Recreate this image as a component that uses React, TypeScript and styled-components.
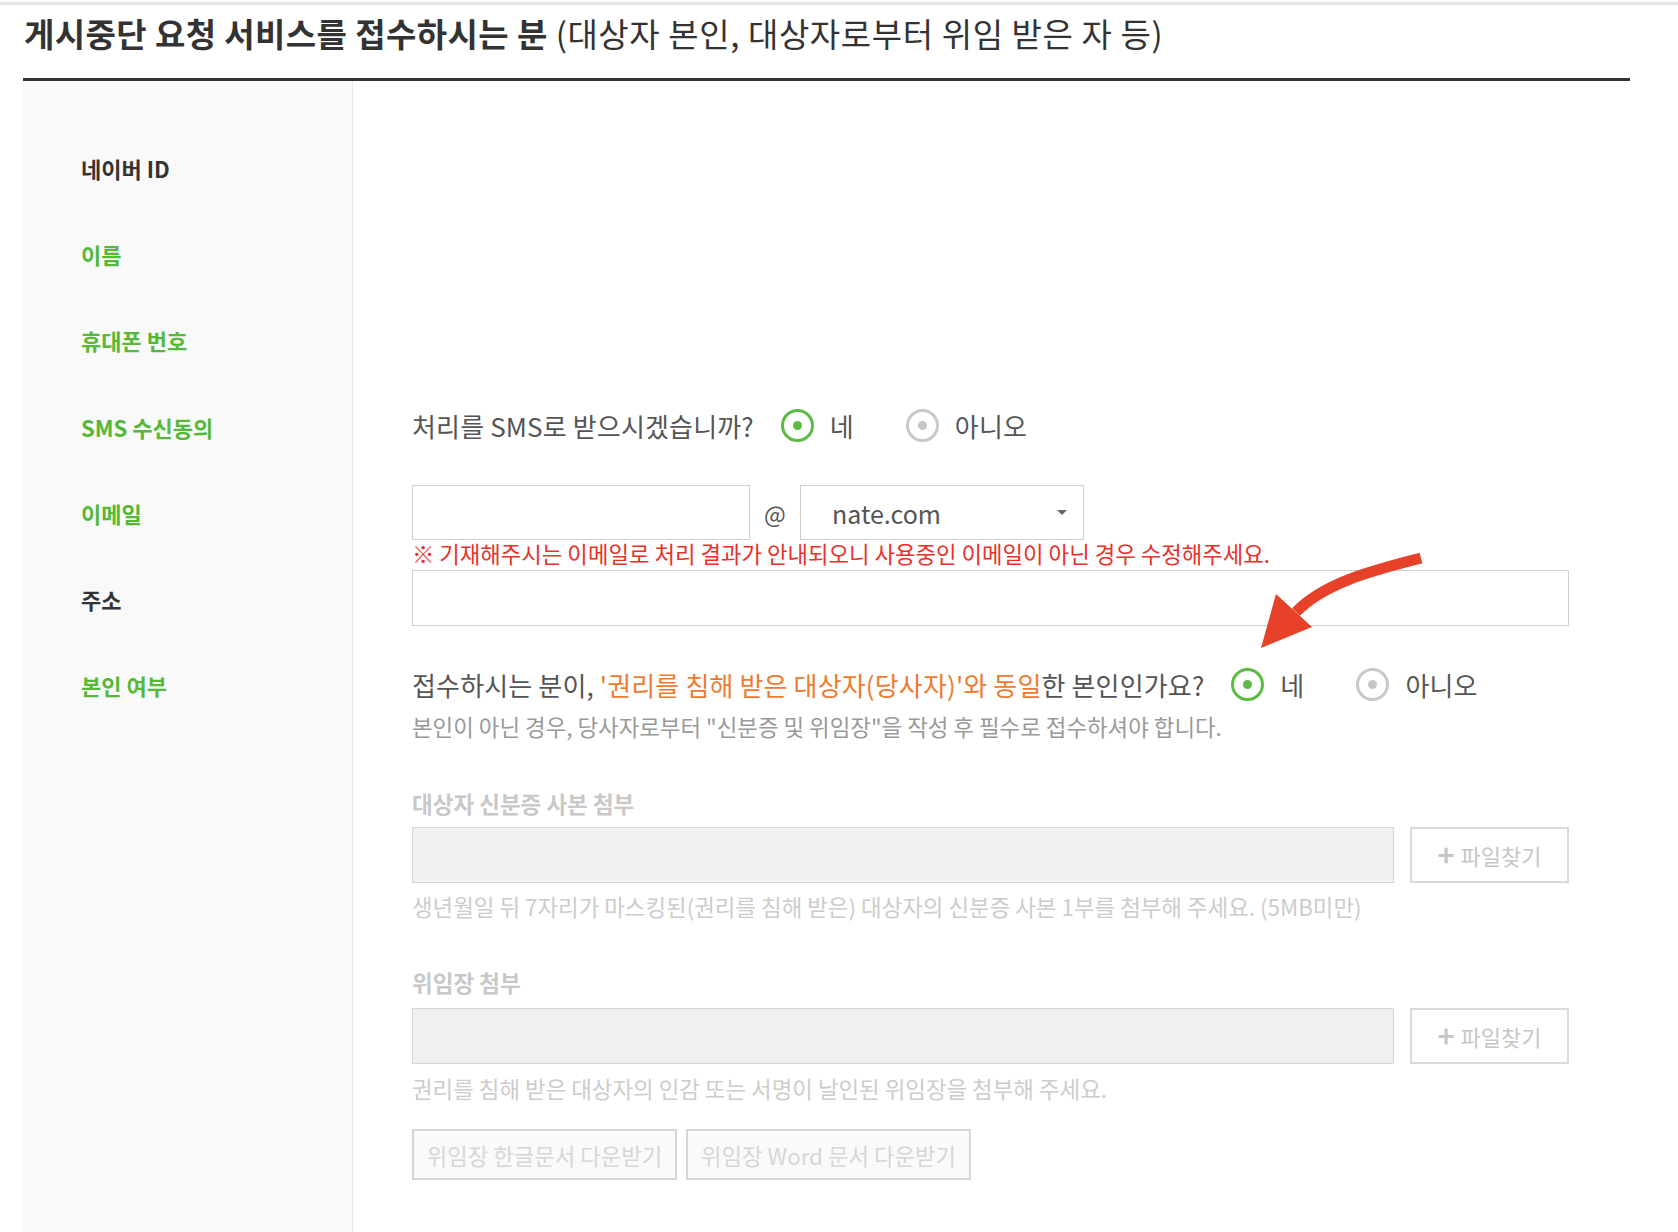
import styled, { createGlobalStyle } from "styled-components";

const GlobalStyle = createGlobalStyle`
  html, body {
    margin: 0;
    padding: 0;
    background: #fff;
  }
  body {
    font-family: "Noto Sans CJK KR", "Noto Sans", sans-serif;
    color: #333;
  }
  * { box-sizing: border-box; }
`;

const Page = styled.div`
  position: relative;
  width: 1678px;
`;

const TopLine = styled.div`
  margin-top: 2px;
  height: 3px;
  background: #e1e5ea;
`;

const Wrapper = styled.div`
  margin-left: 23px;
  width: 1607px;
`;

const Header = styled.div`
  padding: 8px 0 25px 1px;
  border-bottom: 3px solid #333;
`;

const Title = styled.h2`
  margin: 0;
  font-size: 33px;
  line-height: 40px;
  font-weight: 700;
  letter-spacing: 0.4px;
  color: #333;
  white-space: nowrap;
`;

const TitleSub = styled.span`
  font-weight: 400;
  letter-spacing: 0.6px;
`;

const Row = styled.div<{ $height?: number }>`
  display: grid;
  grid-template-columns: 330px 1fr;
  min-height: ${(p) => (p.$height ? `${p.$height}px` : "auto")};
`;

const LabelCell = styled.div<{ $top: number; $green?: boolean }>`
  background: #f9f9f9;
  border-right: 1px solid #e9e9e9;
  padding: ${(p) => p.$top - 1}px 0 0 58px;
  font-size: 22px;
  line-height: 30px;
  font-weight: 700;
  color: ${(p) => (p.$green ? "#55b837" : "#333")};
`;

const ContentCell = styled.div<{ $top?: number; $bottom?: number }>`
  padding: ${(p) => p.$top ?? 0}px 0 ${(p) => p.$bottom ?? 0}px 59px;
`;

const QuestionLine = styled.div`
  display: flex;
  align-items: center;
  height: 34px;
  font-size: 26px;
  letter-spacing: 0.15px;
  color: #555;
  white-space: nowrap;
`;

const Accent = styled.span`
  color: #ef7b30;
`;

const RadioItem = styled.span<{ $first?: boolean }>`
  display: inline-flex;
  align-items: center;
  gap: 16px;
  margin-left: ${(p) => (p.$first ? 27 : 52)}px;
  font-size: 26px;
  color: #555;
`;

const RadioMark = styled.span<{ $on?: boolean }>`
  width: 33px;
  height: 33px;
  border-radius: 50%;
  border: 3.5px solid ${(p) => (p.$on ? "#5cbb45" : "#c9c9c9")};
  display: inline-flex;
  align-items: center;
  justify-content: center;
  filter: ${(p) => (p.$on ? "none" : "blur(0.4px)")};

  &::after {
    content: "";
    width: 9px;
    height: 9px;
    border-radius: 50%;
    background: ${(p) => (p.$on ? "#5cbb45" : "#c6c6c6")};
  }
`;

const EmailLine = styled.div`
  display: flex;
  align-items: center;
  height: 55px;
`;

const TextInput = styled.div<{ $width: number; $height?: number }>`
  width: ${(p) => p.$width}px;
  height: ${(p) => p.$height ?? 55}px;
  border: 1px solid #cfcfcf;
  background: #fff;
`;

const At = styled.span`
  width: 50px;
  text-align: center;
  font-size: 23px;
  color: #555;
`;

const Select = styled.div`
  width: 284px;
  height: 55px;
  border: 1px solid #cfcfcf;
  display: flex;
  align-items: center;
  justify-content: space-between;
  padding: 0 16px 0 31px;
  font-size: 25px;
  color: #555;
`;

const Caret = styled.span`
  width: 0;
  height: 0;
  border-left: 5px solid transparent;
  border-right: 5px solid transparent;
  border-top: 5px solid #666;
`;

const Notice = styled.div`
  height: 26px;
  line-height: 26px;
  font-size: 22.3px;
  color: #e9302a;
  white-space: nowrap;
`;

const SubText = styled.div<{ $top: number; $muted?: boolean }>`
  margin-top: ${(p) => p.$top}px;
  line-height: 28px;
  font-size: 22.4px;
  color: ${(p) => (p.$muted ? "#cccccc" : "#999")};
  white-space: nowrap;
`;

const AttachTitle = styled.div<{ $top: number }>`
  margin-top: ${(p) => p.$top}px;
  line-height: 28px;
  font-size: 22.5px;
  font-weight: 700;
  color: #c8c8c8;
`;

const FileRow = styled.div<{ $top: number }>`
  margin-top: ${(p) => p.$top}px;
  display: flex;
  gap: 16px;
  height: 56px;
`;

const FileBox = styled.div`
  width: 982px;
  height: 100%;
  background: #f0f0f0;
  border: 1px solid #d6d6d6;
`;

const FileButton = styled.div`
  width: 159px;
  height: 100%;
  border: 2px solid #dadada;
  display: flex;
  align-items: center;
  justify-content: center;
  gap: 6px;
  font-size: 22px;
  color: #c6c6c6;
`;

const Plus = styled.span`
  font-size: 29px;
  font-weight: 700;
  line-height: 1;
  margin-top: -3px;
`;

const DownloadRow = styled.div`
  margin-top: 27px;
  display: flex;
  gap: 9px;
`;

const DownloadButton = styled.div<{ $width: number }>`
  width: ${(p) => p.$width}px;
  height: 51px;
  border: 2px solid #d6d6d6;
  background: #fafafa;
  display: flex;
  align-items: center;
  justify-content: center;
  font-size: 22.3px;
  color: #d6d6d6;
  white-space: nowrap;
`;

const ArrowSvg = styled.svg`
  position: absolute;
  left: 1250px;
  top: 540px;
  width: 180px;
  height: 120px;
`;

const Radio = ({ on, label, first }: { on?: boolean; label: string; first?: boolean }) => (
  <RadioItem $first={first}>
    <RadioMark $on={on} />
    {label}
  </RadioItem>
);

const App = () => {
  return (
    <Page>
      <GlobalStyle />
      <TopLine />
      <Wrapper>
        <Header>
          <Title>
            게시중단 요청 서비스를 접수하시는 분 <TitleSub>(대상자 본인, 대상자로부터 위임 받은 자 등)</TitleSub>
          </Title>
        </Header>

        <Row $height={131}>
          <LabelCell $top={73}>네이버 ID</LabelCell>
          <ContentCell />
        </Row>
        <Row $height={86}>
          <LabelCell $top={28} $green>이름</LabelCell>
          <ContentCell />
        </Row>
        <Row $height={86}>
          <LabelCell $top={28} $green>휴대폰 번호</LabelCell>
          <ContentCell />
        </Row>
        <Row $height={86}>
          <LabelCell $top={29} $green>SMS 수신동의</LabelCell>
          <ContentCell $top={24}>
            <QuestionLine>
              처리를 SMS로 받으시겠습니까?
              <Radio on label="네" first />
              <Radio label="아니오" />
            </QuestionLine>
          </ContentCell>
        </Row>
        <Row $height={96}>
          <LabelCell $top={29} $green>이메일</LabelCell>
          <ContentCell $top={15}>
            <EmailLine>
              <TextInput $width={338} />
              <At>@</At>
              <Select>
                nate.com
                <Caret />
              </Select>
            </EmailLine>
            <Notice>※ 기재해주시는 이메일로 처리 결과가 안내되오니 사용중인 이메일이 아닌 경우 수정해주세요.</Notice>
          </ContentCell>
        </Row>
        <Row $height={74}>
          <LabelCell $top={19}>주소</LabelCell>
          <ContentCell $top={4}>
            <TextInput $width={1157} $height={56} />
          </ContentCell>
        </Row>
        <Row>
          <LabelCell $top={31} $green>본인 여부</LabelCell>
          <ContentCell $top={27} $bottom={70}>
            <QuestionLine>
              접수하시는 분이,&nbsp;<Accent>'권리를 침해 받은 대상자(당사자)'와 동일</Accent>한 본인인가요?
              <Radio on label="네" first />
              <Radio label="아니오" />
            </QuestionLine>
            <SubText $top={11}>
              본인이 아닌 경우, 당사자로부터 "신분증 및 위임장"을 작성 후 필수로 접수하셔야 합니다.
            </SubText>

            <AttachTitle $top={49}>대상자 신분증 사본 첨부</AttachTitle>
            <FileRow $top={10}>
              <FileBox />
              <FileButton>
                <Plus>+</Plus>파일찾기
              </FileButton>
            </FileRow>
            <SubText $top={9} $muted>
              생년월일 뒤 7자리가 마스킹된(권리를 침해 받은) 대상자의 신분증 사본 1부를 첨부해 주세요. (5MB미만)
            </SubText>

            <AttachTitle $top={48}>위임장 첨부</AttachTitle>
            <FileRow $top={12}>
              <FileBox />
              <FileButton>
                <Plus>+</Plus>파일찾기
              </FileButton>
            </FileRow>
            <SubText $top={10} $muted>
              권리를 침해 받은 대상자의 인감 또는 서명이 날인된 위임장을 첨부해 주세요.
            </SubText>

            <DownloadRow>
              <DownloadButton $width={265}>위임장 한글문서 다운받기</DownloadButton>
              <DownloadButton $width={285}>위임장 Word 문서 다운받기</DownloadButton>
            </DownloadRow>
          </ContentCell>
        </Row>
      </Wrapper>

      <ArrowSvg viewBox="0 0 180 120">
        <path d="M171 16 C125 28 75 40 46 70" fill="none" stroke="#e8412a" strokeWidth="11" />
        <polygon points="11,106 26,52 62,85" fill="#e8412a" />
      </ArrowSvg>
    </Page>
  );
};

export default App;
